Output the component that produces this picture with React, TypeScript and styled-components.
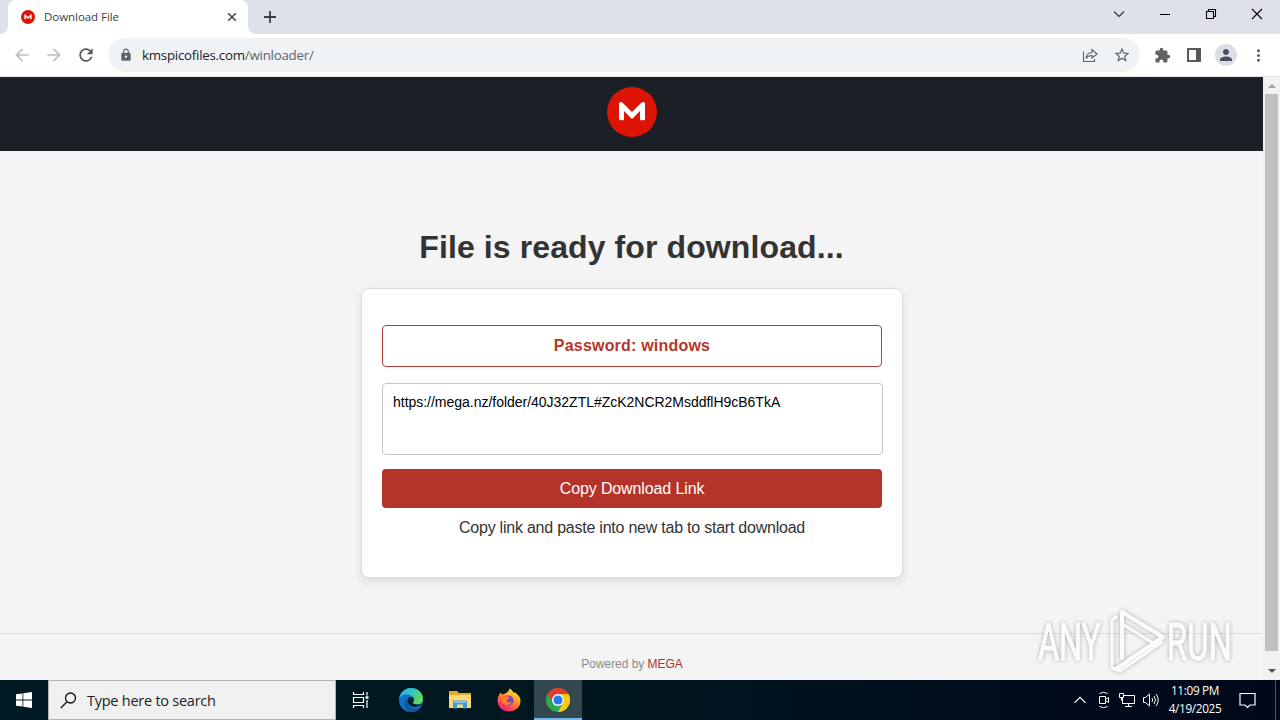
import type { ReactNode } from 'react';
import styled, { createGlobalStyle } from 'styled-components';
import {
  MdArrowBack,
  MdArrowForward,
  MdExtension,
  MdLock,
  MdMoreVert,
  MdPerson,
  MdRefresh,
  MdStarBorder,
} from 'react-icons/md';

const GlobalStyle = createGlobalStyle`
  * {
    box-sizing: border-box;
  }

  body {
    margin: 0;
    overflow: hidden;
  }
`;

const Screen = styled.div`
  position: relative;
  display: flex;
  flex-direction: column;
  width: 1280px;
  height: 720px;
  overflow: hidden;
  font-family: "Liberation Sans", Arial, sans-serif;
`;

const UiText = styled.span<{ $size: number; $spacing?: number; $color?: string }>`
  font-family: "Open Sans", "Noto Sans", sans-serif;
  font-size: ${({ $size }) => $size}px;
  letter-spacing: ${({ $spacing }) => $spacing ?? 0}px;
  color: ${({ $color }) => $color ?? '#3c4043'};
  line-height: 18px;
  white-space: nowrap;
`;

/* Browser */

const TabStrip = styled.div`
  display: flex;
  height: 34px;
  background: #dee1e8;
`;

const StripEdge = styled.div<{ $side: 'left' | 'right' }>`
  width: 8px;
  background: #fff;

  &::before {
    content: "";
    display: block;
    height: 34px;
    background: #dee1e8;
    border-radius: ${({ $side }) => ($side === 'left' ? '0 0 8px 0' : '0 0 0 8px')};
  }
`;

const Tab = styled.div`
  display: flex;
  align-items: center;
  width: 240px;
  padding: 0 10px 0 13px;
  background: #fff;
  border-radius: 8px 8px 0 0;
`;

const TabTitle = styled(UiText)`
  flex: 1;
  margin-left: 9px;
`;

const NewTab = styled.div`
  display: flex;
  align-items: center;
  margin-left: 7px;
`;

const WindowButtons = styled.div`
  display: flex;
  align-items: center;
  gap: 30px;
  height: 28px;
  margin-left: auto;
  padding-right: 17px;

  svg {
    display: block;
  }
`;

const Toolbar = styled.div`
  display: flex;
  align-items: center;
  height: 43px;
  padding: 0 12px;
  background: #fff;
  border-bottom: 1px solid #e4e6ea;
  color: #5f6368;
`;

const NavButtons = styled.div`
  display: flex;
  gap: 12px;
  margin-right: 12px;
`;

const NavIcon = styled.span<{ $disabled?: boolean }>`
  display: flex;
  font-size: 20px;
  color: ${({ $disabled }) => ($disabled ? '#bcbec1' : '#55595e')};
`;

const AddressBar = styled.div`
  display: flex;
  align-items: center;
  width: 1032px;
  height: 34px;
  padding: 0 9px 0 11px;
  background: #f0f3f6;
  border-radius: 17px;
`;

const Url = styled.div`
  flex: 1;
  margin-left: 9px;
`;

const AddressActions = styled.div`
  display: flex;
  align-items: center;
  gap: 14px;
  font-size: 18px;
`;

const Extensions = styled.div`
  display: flex;
  align-items: center;
  margin-left: 14px;
  font-size: 18px;
`;

const PanelIcon = styled.svg`
  margin-left: 16px;
`;

const Avatar = styled.div`
  display: flex;
  align-items: center;
  justify-content: center;
  width: 22px;
  height: 22px;
  margin: 0 12px 0 14px;
  border-radius: 50%;
  background: #dcdfe8;
  color: #4a4f62;
  font-size: 18px;
`;

/* Web page */

const Viewport = styled.div`
  display: flex;
  height: 603px;
`;

const Page = styled.div`
  width: 1263px;
  background: #f4f4f4;
  color: #333;
  text-align: center;
`;

const Header = styled.div`
  display: flex;
  justify-content: center;
  height: 74px;
  padding: 10px 0 0 1px;
  background: #1b1f26;
`;

const Title = styled.h1`
  margin: 77px 0 22px;
  font-size: 32px;
  line-height: 38px;
  letter-spacing: 0.1px;
`;

const Card = styled.div`
  display: flex;
  flex-direction: column;
  width: 542px;
  height: 290px;
  margin: 0 0 0 361px;
  padding: 36px 20px 0;
  background: #fff;
  border: 1px solid #ddd;
  border-radius: 8px;
  box-shadow: 0 4px 8px rgba(0, 0, 0, 0.1);
`;

const Password = styled.div`
  height: 42px;
  border: 1px solid #bb3d35;
  border-radius: 4px;
  color: #b9352c;
  font-size: 16px;
  font-weight: bold;
  line-height: 40px;
  letter-spacing: 0.2px;
`;

const LinkBox = styled.div`
  width: 501px;
  height: 72px;
  margin-top: 16px;
  padding: 10px;
  border: 1px solid #c6c6c6;
  border-radius: 4px;
  color: #000;
  font-size: 14px;
  line-height: 16px;
  letter-spacing: -0.02px;
  text-align: left;
`;

const CopyButton = styled.div`
  height: 39px;
  margin-top: 14px;
  background: #b53429;
  border-radius: 4px;
  color: #fff;
  font-size: 16px;
  line-height: 39px;
  letter-spacing: -0.12px;
`;

const Hint = styled.div`
  margin-top: 11px;
  font-size: 16px;
  line-height: 18px;
  letter-spacing: -0.23px;
`;

const Footer = styled.div`
  margin-top: 55px;
  padding: 23px 0 0 1px;
  border-top: 1px solid #ddd;
  color: #8b8b8b;
  font-size: 12px;
  line-height: 14px;
  letter-spacing: -0.05px;

  span {
    color: #b3302a;
  }
`;

const Scrollbar = styled.div`
  display: flex;
  flex-direction: column;
  align-items: center;
  width: 17px;
  padding-top: 7px;
  background: #f1f1f1;
`;

const Thumb = styled.div`
  width: 13px;
  height: 557px;
  margin: 6px 0 18px;
  background: #c1c1c1;
`;

const ScrollArrow = styled.div<{ $up?: boolean }>`
  border: 4px solid transparent;
  border-top-width: ${({ $up }) => ($up ? 0 : 4)}px;
  border-bottom-width: ${({ $up }) => ($up ? 4 : 0)}px;
  border-top-color: #505050;
  border-bottom-color: #a3a3a3;
`;

const Watermark = styled.svg`
  position: absolute;
  left: 1030px;
  top: 600px;
  filter: drop-shadow(0 0 2px rgba(0, 0, 0, 0.4));
  opacity: 0.75;
`;

/* Taskbar */

const Taskbar = styled.div`
  display: flex;
  height: 40px;
  background: linear-gradient(90deg, #001a23 0, #00171f 600px, #000b1c 1050px, #000919 100%);
`;

const StartButton = styled.div`
  display: flex;
  align-items: center;
  justify-content: center;
  width: 48px;
`;

const SearchBox = styled.div`
  display: flex;
  align-items: center;
  gap: 10px;
  width: 288px;
  padding: 1px 0 0 11px;
  background: #f0f0f0;
  border: 1px solid #b5b5b5;
`;

const TaskButtons = styled.div`
  display: flex;
  padding-left: 1px;
`;

const TaskButton = styled.div<{ $active?: boolean }>`
  display: flex;
  align-items: center;
  justify-content: center;
  width: ${({ $active }) => ($active ? 48 : 49)}px;
  margin-left: ${({ $active }) => ($active ? 1 : 0)}px;
  background: ${({ $active }) => ($active ? '#33474f' : 'transparent')};
  box-shadow: ${({ $active }) => ($active ? 'inset 0 -2px #76b9ed' : 'none')};
`;

const Tray = styled.div`
  display: flex;
  align-items: center;
  margin-left: auto;
`;

const TrayIcons = styled.div`
  display: flex;
  align-items: center;
  gap: 6px;
  margin-right: 8px;
`;

const TrayArrow = styled.div`
  display: flex;
  margin-right: 5px;
`;

const Clock = styled.div`
  display: flex;
  flex-direction: column;
  align-items: center;
  width: 54px;
  height: 38px;
  margin-right: 17px;
`;

const ShowDesktop = styled.div`
  width: 5px;
  height: 40px;
  margin-left: 19px;
  border-left: 1px solid #4d5564;
`;

const MegaLogo = ({ size }: { size: number }) => (
  <svg width={size} height={size} viewBox="0 0 50 50">
    <circle cx="25" cy="25" r="25" fill="#dd1405" />
    <path
      d="M12 32.2V16.3q0-1 1-1h1.7q.6 0 1 .4L25 25l9.3-9.3q.4-.4 1-.4H37q1 0 1 1v15.9q0 1-1 1h-3q-1 0-1-1v-8.3l-7 7q-1 1-2 0l-7-7v8.3q0 1-1 1h-3q-1 0-1-1z"
      fill="#fff"
    />
  </svg>
);

type LineIconProps = {
  width: number;
  height: number;
  color?: string;
  stroke?: number;
  children: ReactNode;
}

const LineIcon = ({ width, height, color = '#fff', stroke = 1, children }: LineIconProps) => (
  <svg width={width} height={height} viewBox={`0 0 ${width} ${height}`} fill="none" stroke={color} strokeWidth={stroke}>
    {children}
  </svg>
);

const BrowserTabs = () => (
  <TabStrip>
    <StripEdge $side="left" />
    <Tab>
      <MegaLogo size={14} />
      <TabTitle $size={11.5} $spacing={-0.05}>Download File</TabTitle>
      <LineIcon width={12} height={12} color="#45494d" stroke={1.6}>
        <path d="M2.200 2.200l7.600 7.600M9.800 2.200L2.200 9.800" />
      </LineIcon>
    </Tab>
    <StripEdge $side="right" />
    <NewTab>
      <LineIcon width={14} height={14} color="#3c4043" stroke={1.8}>
        <path d="M7 1v12M1 7h12" />
      </LineIcon>
    </NewTab>
    <WindowButtons>
      <LineIcon width={12} height={12} color="#333" stroke={1.2}>
        <path d="M1 3.500l5 5 5-5" />
      </LineIcon>
      <LineIcon width={20} height={12} color="#000">
        <path d="M5 6.500h10" />
      </LineIcon>
      <LineIcon width={12} height={12} color="#000" stroke={1.1}>
        <path d="M1.500 3.500h7v7h-7zM3.500 3.500v-2h7v7h-2" />
      </LineIcon>
      <LineIcon width={16} height={12} color="#000" stroke={1.1}>
        <path d="M5 1l10 10M15 1L5 11" />
      </LineIcon>
    </WindowButtons>
  </TabStrip>
);

const BrowserToolbar = () => (
  <Toolbar>
    <NavButtons>
      <NavIcon $disabled><MdArrowBack /></NavIcon>
      <NavIcon $disabled><MdArrowForward /></NavIcon>
      <NavIcon><MdRefresh /></NavIcon>
    </NavButtons>
    <AddressBar>
      <MdLock size={14} />
      <Url>
        <UiText $size={13.3} $spacing={-0.24} $color="#202124">kmspicofiles.com</UiText>
        <UiText $size={13.3} $spacing={-0.24} $color="#5f6368">/winloader/</UiText>
      </Url>
      <AddressActions>
        <LineIcon width={17} height={16} color="#5f6368" stroke={1.1}>
          <path d="M1.500 4.500v10H12.500V12M4 11.500q.5-5.500 6-6V2.500L15 7l-5 4V8.500Q6 8.500 4 11.500z" />
        </LineIcon>
        <MdStarBorder />
      </AddressActions>
    </AddressBar>
    <Extensions>
      <MdExtension size={17} />
      <PanelIcon width="14" height="14" viewBox="0 0 14 14">
        <path d="M0 0h14v14H0zM2 2v10h7V2z" fill="#55595e" fillRule="evenodd" />
      </PanelIcon>
      <Avatar><MdPerson /></Avatar>
      <MdMoreVert size={19} />
    </Extensions>
  </Toolbar>
);

const DownloadPage = () => (
  <Page>
    <Header><MegaLogo size={50} /></Header>
    <Title>File is ready for download...</Title>
    <Card>
      <Password>Password: windows</Password>
      <LinkBox>https://mega.nz/folder/40J32ZTL#ZcK2NCR2MsddflH9cB6TkA</LinkBox>
      <CopyButton>Copy Download Link</CopyButton>
      <Hint>Copy link and paste into new tab to start download</Hint>
    </Card>
    <Footer>Powered by <span>MEGA</span></Footer>
  </Page>
);

const EdgeIcon = () => (
  <svg width="24" height="24" viewBox="0 0 24 24">
    <defs>
      <linearGradient id="edgeTop" x1="0" y1="0" x2="1" y2="0.4">
        <stop offset="0" stopColor="#2aa7e4" />
        <stop offset="0.5" stopColor="#31c3c5" />
        <stop offset="1" stopColor="#62d957" />
      </linearGradient>
    </defs>
    <circle cx="12" cy="12" r="12" fill="#0f74c8" />
    <path d="M.3 10.500C1.200 4.400 6 0 12 0c7 0 12 5 12 10.500 0 4-3 6-6.200 6-2.800 0-4.300-1.100-4-2 .9-1 1.200-1.800 1.200-2.900C15 8.500 11.500 6.500 8 6.500c-3.500 0-6.500 1.500-7.700 4z" fill="url(#edgeTop)" />
    <path d="M8.500 12.500C8.500 19 13.500 22 19.500 20.500c1.300-.4 2.500-1.200 3-2-2 4-6 5.700-10 5.500C8 23 5.500 19.500 5.500 16.500c0-3.500 2-6 4.500-6.500-1 .5-1.500 1.500-1.500 2.500z" fill="#1554a0" />
    <path d="M13.800 14.500c.9-1 1.200-1.800 1.200-2.900 0-1.700-1.500-2.600-3-2.600-2 0-3.500 1.500-3.500 3.500 0 3.500 3 6.500 7 6.500 3 0 5.500-1 7.500-3l.7-.5c-2 1-4 1.200-5.900 1-2.800 0-4.300-1.100-4-2z" fill="#04222f" />
  </svg>
);

const FolderIcon = () => (
  <svg width="22" height="20" viewBox="0 0 22 20">
    <path d="M0 1h8l2 2h12v15H0z" fill="#e8a92e" />
    <path d="M0 5h22v13H0z" fill="#fbd975" />
    <path d="M4 18.500v-7q0-1 1-1h12q1 0 1 1v7h-4v-4H8v4z" fill="#3c9bd9" />
    <path d="M5 11h12v2H5z" fill="#7cc5ee" />
  </svg>
);

const FirefoxIcon = () => (
  <svg width="24" height="24" viewBox="0 0 24 24">
    <defs>
      <linearGradient id="fox" x1="0.8" y1="0" x2="0.2" y2="1">
        <stop offset="0" stopColor="#ffec3e" />
        <stop offset="0.4" stopColor="#ff9a1f" />
        <stop offset="0.75" stopColor="#ff4055" />
        <stop offset="1" stopColor="#e31587" />
      </linearGradient>
    </defs>
    <path d="M3.500 4.500L5 6.500l3-1C10 4.500 12 3 12.500.5c2 1 3.500 2.500 4 4.500l1-1c3.500 2.500 6 5 6 9C23.500 19 18.500 23.500 12 23.500S.5 19 .5 12.500c0-3 1.200-5.500 3-8z" fill="url(#fox)" />
    <circle cx="11.500" cy="12.500" r="5" fill="#7542c8" />
    <path d="M4 8c2-1 4-1 6 .5l3 .5c0 1.500-3 1.500-3 3.500 0 2 3 2.500 5 1-1 2.500-3 3.500-5 3.500C6.500 17 3.500 13 4 8z" fill="#ff7b2c" />
    <path d="M12 3c0 4 5.500 4.500 5.500 9.500 0-4-2.500-5-4.500-5.500-1.500-1-2-2.500-1-4z" fill="#ffd13b" />
  </svg>
);

const ChromeIcon = () => (
  <svg width="24" height="24" viewBox="0 0 24 24">
    <circle cx="12" cy="12" r="12" fill="#2da94f" />
    <path d="M1.600 6A12 12 0 0 1 22.400 6H12a6 6 0 0 0-5.200 9z" fill="#e33b2e" />
    <path d="M22.400 6A12 12 0 0 1 12 24l5.200-9A6 6 0 0 0 12 6z" fill="#fdc912" />
    <circle cx="12" cy="12" r="6" fill="#fff" />
    <circle cx="12" cy="12" r="4.600" fill="#2a78ee" />
  </svg>
);

const WindowsTaskbar = () => (
  <Taskbar>
    <StartButton>
      <svg width="16" height="16" viewBox="0 0 16 16" fill="#fff">
        <path d="M0 2.300L6.500 1.400v6.200H0zM7.300 1.300L16 0v7.600H7.300zM0 8.400h6.500v6.200L0 13.700zM7.300 8.400H16V16l-8.700-1.300z" />
      </svg>
    </StartButton>
    <SearchBox>
      <LineIcon width={17} height={17} color="#111" stroke={1.3}>
        <circle cx="10.500" cy="6" r="5" />
        <path d="M7 9.700L.8 16" />
      </LineIcon>
      <UiText $size={14.5} $spacing={-0.25} $color="#222">Type here to search</UiText>
    </SearchBox>
    <TaskButtons>
      <TaskButton>
        <LineIcon width={19} height={16} stroke={1.2}>
          <path d="M1.500 0v2.500h10V0M1.500 16v-2.500h10V16M1.500 5.500h10v5h-10zM15 0v3.500M15 8v8" />
          <path d="M13.500 5.500h3" strokeWidth="2.500" />
        </LineIcon>
      </TaskButton>
      <TaskButton><EdgeIcon /></TaskButton>
      <TaskButton><FolderIcon /></TaskButton>
      <TaskButton><FirefoxIcon /></TaskButton>
      <TaskButton $active><ChromeIcon /></TaskButton>
    </TaskButtons>
    <Tray>
      <TrayIcons>
        <TrayArrow>
          <LineIcon width={12} height={12} stroke={1.2}>
            <path d="M.5 8.800L6 3.300l5.500 5.500" />
          </LineIcon>
        </TrayArrow>
        <LineIcon width={16} height={18}>
          <path d="M2.500 5.500h6v7h-6zM8.500 8.500l3-2v5l-3-2M2.500 2.500q4-2.500 8 0M2.500 15.500q4 2.500 8 0" />
        </LineIcon>
        <LineIcon width={17} height={16}>
          <path d="M5 3.500h10.500v8H3.500V6M9.500 11.500v3M6 14.500h7M.5 1.500h4v4h-4zM2.500 5.500v3" />
        </LineIcon>
        <LineIcon width={18} height={16}>
          <path d="M1.500 5.500h2l4-3.500v12l-4-3.500h-2zM10 6q1.500 2 0 4M12 4q3 4 0 8M14 2q4.500 6 0 12" />
        </LineIcon>
      </TrayIcons>
      <Clock>
        <UiText $size={11.8} $spacing={-0.35} $color="#fff">11:09 PM</UiText>
        <UiText $size={11.8} $spacing={-0.35} $color="#fff">4/19/2025</UiText>
      </Clock>
      <LineIcon width={17} height={17} stroke={1.2}>
        <path d="M1 1.500h15v11.500h-5L8.500 15.500 6 13H1z" />
      </LineIcon>
      <ShowDesktop />
    </Tray>
  </Taskbar>
);

export default function App() {
  return (
    <Screen>
      <GlobalStyle />
      <BrowserTabs />
      <BrowserToolbar />
      <Viewport>
        <DownloadPage />
        <Scrollbar>
          <ScrollArrow $up />
          <Thumb />
          <ScrollArrow />
        </Scrollbar>
      </Viewport>
      <WindowsTaskbar />
      <Watermark width="230" height="80" fontFamily="Roboto, sans-serif" fontSize="52" fill="#fff" stroke="#fff">
        <text transform="translate(8 60) scale(.62 1)">ANY</text>
        <text transform="translate(137 60) scale(.63 1)">RUN</text>
        <g fill="none" strokeWidth="4" strokeLinejoin="round" strokeLinecap="round">
          <path d="M92 58V12l41 25-47 32" />
          <path d="M82 68V20l4-3M94 25l32 20M82 68l8 3 42-29" strokeWidth="3" />
        </g>
      </Watermark>
    </Screen>
  );
}
